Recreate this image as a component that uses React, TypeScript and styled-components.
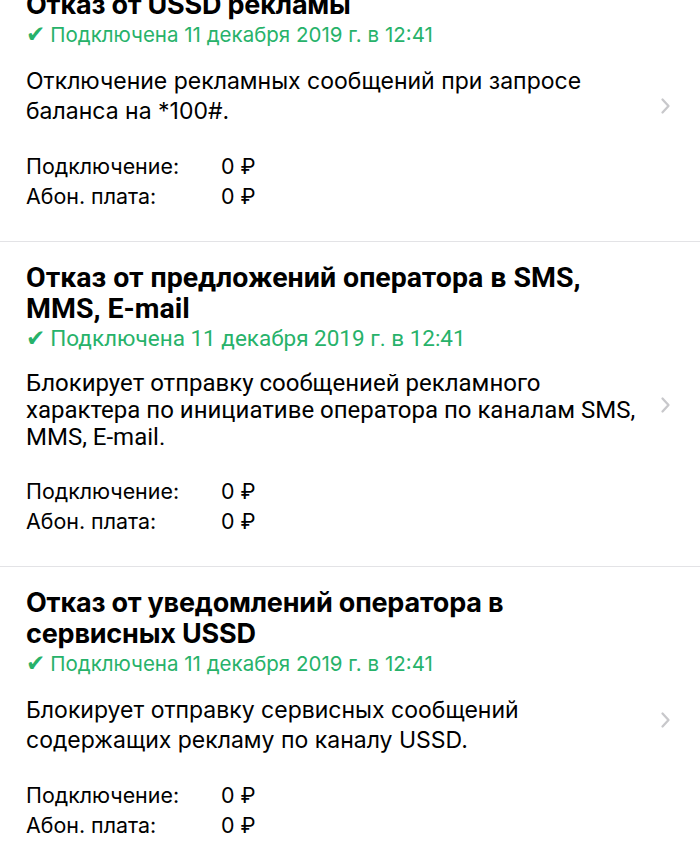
import React from 'react';
import styled, { createGlobalStyle, css } from 'styled-components';

const GlobalStyle = createGlobalStyle`
  html, body {
    margin: 0;
    padding: 0;
    background: #ffffff;
  }
  body {
    font-family: Inter, 'Noto Sans', 'Liberation Sans', sans-serif;
    color: #000;
    overflow: hidden;
  }
`;

const List = styled.div`
  display: flex;
  flex-direction: column;
  margin-top: -31px;
`;

const Item = styled.div`
  display: flex;
  align-items: center;
  padding: 20px 0 30px 26px;
  border-bottom: 1px solid #e3e3e6;
`;

const Body = styled.div<{ $narrow?: boolean }>`
  flex: 1;
  min-width: 0;
  ${(p) =>
    p.$narrow &&
    css`
      font-family: Roboto, 'Liberation Sans', sans-serif;
    `}
`;

const Title = styled.div<{ $narrow?: boolean }>`
  font-size: 27px;
  font-weight: 700;
  line-height: 31px;
  letter-spacing: -0.2px;
  ${(p) =>
    p.$narrow &&
    css`
      font-size: 28.5px;
      letter-spacing: 0;
    `}
`;

const Status = styled.div<{ $narrow?: boolean }>`
  font-size: 20.5px;
  line-height: 29px;
  color: #27b26a;
  ${(p) =>
    p.$narrow &&
    css`
      font-size: 22.5px;
    `}
`;

const Check = styled.span`
  font-family: 'DejaVu Sans', sans-serif;
  font-size: 23px;
  margin-right: 5px;
`;

const Description = styled.div<{ $narrow?: boolean }>`
  margin-top: 17px;
  font-size: 23px;
  line-height: 30px;
  ${(p) =>
    p.$narrow &&
    css`
      font-size: 24px;
      line-height: 27px;
    `}
`;

const Prices = styled.div`
  margin-top: 25px;
  display: grid;
  grid-template-columns: 195px auto;
  font-size: 21.4px;
  line-height: 30px;
  font-family: Inter, 'Noto Sans', 'Liberation Sans', sans-serif;
`;

const Chevron = styled.svg`
  flex: none;
  width: 11px;
  height: 18px;
  margin: 12px 29px 0 15px;
  align-self: center;
`;

type Service = {
  title: React.ReactNode;
  description: React.ReactNode;
  narrow?: boolean;
};

const services: Service[] = [
  {
    title: 'Отказ от USSD рекламы',
    description: (
      <>
        Отключение рекламных сообщений при запросе
        <br />
        баланса на *100#.
      </>
    ),
  },
  {
    title: (
      <>
        Отказ от предложений оператора в SMS,
        <br />
        MMS, E-mail
      </>
    ),
    description: (
      <>
        Блокирует отправку сообщенией рекламного
        <br />
        характера по инициативе оператора по каналам SMS,
        <br />
        MMS, E-mail.
      </>
    ),
    narrow: true,
  },
  {
    title: (
      <>
        Отказ от уведомлений оператора в
        <br />
        сервисных USSD
      </>
    ),
    description: (
      <>
        Блокирует отправку сервисных сообщений
        <br />
        содержащих рекламу по каналу USSD.
      </>
    ),
  },
];

function ServiceItem({ service }: { service: Service }) {
  const n = service.narrow;
  return (
    <Item>
      <Body $narrow={n}>
        <Title $narrow={n}>{service.title}</Title>
        <Status $narrow={n}>
          <Check>✔</Check>Подключена 11 декабря 2019 г. в 12:41
        </Status>
        <Description $narrow={n}>{service.description}</Description>
        <Prices>
          <span>Подключение:</span>
          <span>0 ₽</span>
          <span>Абон. плата:</span>
          <span>0 ₽</span>
        </Prices>
      </Body>
      <Chevron viewBox="0 0 11 18">
        <path
          d="M2.5 2.5 L8.5 9 L2.5 15.5"
          fill="none"
          stroke="#c8c8cb"
          strokeWidth="2.3"
          strokeLinecap="round"
          strokeLinejoin="round"
        />
      </Chevron>
    </Item>
  );
}

export default function App() {
  return (
    <>
      <GlobalStyle />
      <List>
        {services.map((s, i) => (
          <ServiceItem key={i} service={s} />
        ))}
      </List>
    </>
  );
}
